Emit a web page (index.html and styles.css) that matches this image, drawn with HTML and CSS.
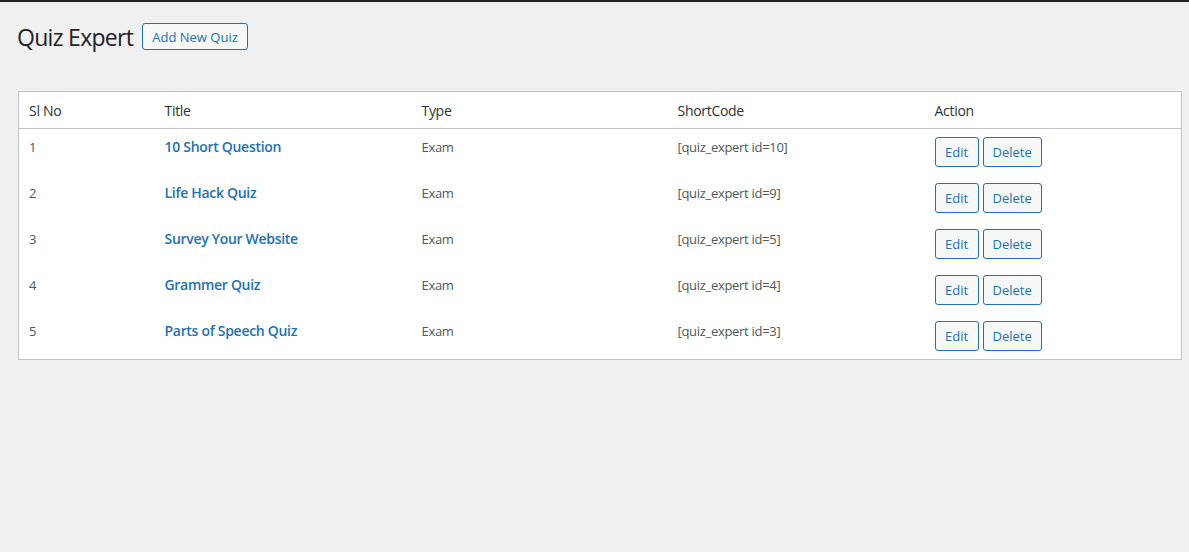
FILE: index.html
```html
<!DOCTYPE html>
<html lang="en">
<head>
<meta charset="utf-8">
<title>Quiz Expert</title>
<link rel="stylesheet" href="styles.css">
</head>
<body>
<div class="topbar"></div>
<div class="wrap">
  <div class="page-head">
    <h1 class="page-title">Quiz Expert</h1>
    <a class="btn btn-head" href="#">Add New Quiz</a>
  </div>
  <table class="quiz-table">
    <colgroup>
      <col class="c-no"><col class="c-title"><col class="c-type"><col class="c-code"><col class="c-act">
    </colgroup>
    <thead>
      <tr><th>Sl No</th><th>Title</th><th>Type</th><th>ShortCode</th><th>Action</th></tr>
    </thead>
    <tbody>
      <tr><td>1</td><td><a class="qlink" href="#">10 Short Question</a></td><td>Exam</td><td>[quiz_expert id=10]</td><td><div class="actions"><a class="btn" href="#">Edit</a><a class="btn" href="#">Delete</a></div></td></tr>
      <tr><td>2</td><td><a class="qlink" href="#">Life Hack Quiz</a></td><td>Exam</td><td>[quiz_expert id=9]</td><td><div class="actions"><a class="btn" href="#">Edit</a><a class="btn" href="#">Delete</a></div></td></tr>
      <tr><td>3</td><td><a class="qlink" href="#">Survey Your Website</a></td><td>Exam</td><td>[quiz_expert id=5]</td><td><div class="actions"><a class="btn" href="#">Edit</a><a class="btn" href="#">Delete</a></div></td></tr>
      <tr><td>4</td><td><a class="qlink" href="#">Grammer Quiz</a></td><td>Exam</td><td>[quiz_expert id=4]</td><td><div class="actions"><a class="btn" href="#">Edit</a><a class="btn" href="#">Delete</a></div></td></tr>
      <tr><td>5</td><td><a class="qlink" href="#">Parts of Speech Quiz</a></td><td>Exam</td><td>[quiz_expert id=3]</td><td><div class="actions"><a class="btn" href="#">Edit</a><a class="btn" href="#">Delete</a></div></td></tr>
    </tbody>
  </table>
</div>
</body>
</html>
```
FILE: styles.css
```css
html, body {
  margin: 0;
  padding: 0;
  background: #f0f0f1;
  font-family: "Open Sans", "Noto Sans", sans-serif;
  color: #3c434a;
  font-size: 13px;
}
.topbar {
  height: 2px;
  background: #1d2327;
}
.wrap {
  padding: 0 7px 0 18px;
}
.page-head {
  display: flex;
  align-items: center;
  gap: 9px;
  padding-top: 19px;
  height: 31px;
}
.page-title {
  margin: 0 0 0 -1px;
  font-size: 23px;
  font-weight: 400;
  color: #1d2327;
  line-height: 30px;
  letter-spacing: -0.7px;
}
.btn {
  display: inline-flex;
  align-items: center;
  justify-content: center;
  box-sizing: border-box;
  height: 30px;
  min-width: 44px;
  padding: 0 9px;
  border: 1px solid #2271b1;
  border-radius: 3px;
  background: #f6f7f7;
  color: #2271b1;
  font-size: 13px;
  letter-spacing: 0;
  text-decoration: none;
}
.btn-head {
  height: 27px;
  padding: 0 9px;
}
.quiz-table {
  margin-top: 39px;
  width: 1164px;
  border-collapse: collapse;
  table-layout: fixed;
  background: #fff;
  border: 1px solid #c3c4c7;
}
.c-no { width: 136px; }
.c-title { width: 257px; }
.c-type { width: 256px; }
.c-code { width: 257px; }
.c-act { width: auto; }
.quiz-table th {
  text-align: left;
  font-weight: 400;
  font-size: 14px;
  color: #2c3338;
  padding: 9px 10px 7px;
  line-height: 20px;
  border-bottom: 1px solid #c3c4c7;
  letter-spacing: -0.3px;
}
.quiz-table td {
  vertical-align: top;
  padding: 8px 10px;
  line-height: 20px;
  color: #50575e;
  font-size: 13px;
  letter-spacing: -0.3px;
}
.qlink {
  color: #2271b1;
  font-weight: 600;
  font-size: 14px;
  text-decoration: none;
  letter-spacing: -0.3px;
}
.actions {
  display: flex;
  gap: 4px;
  letter-spacing: 0;
}
```
